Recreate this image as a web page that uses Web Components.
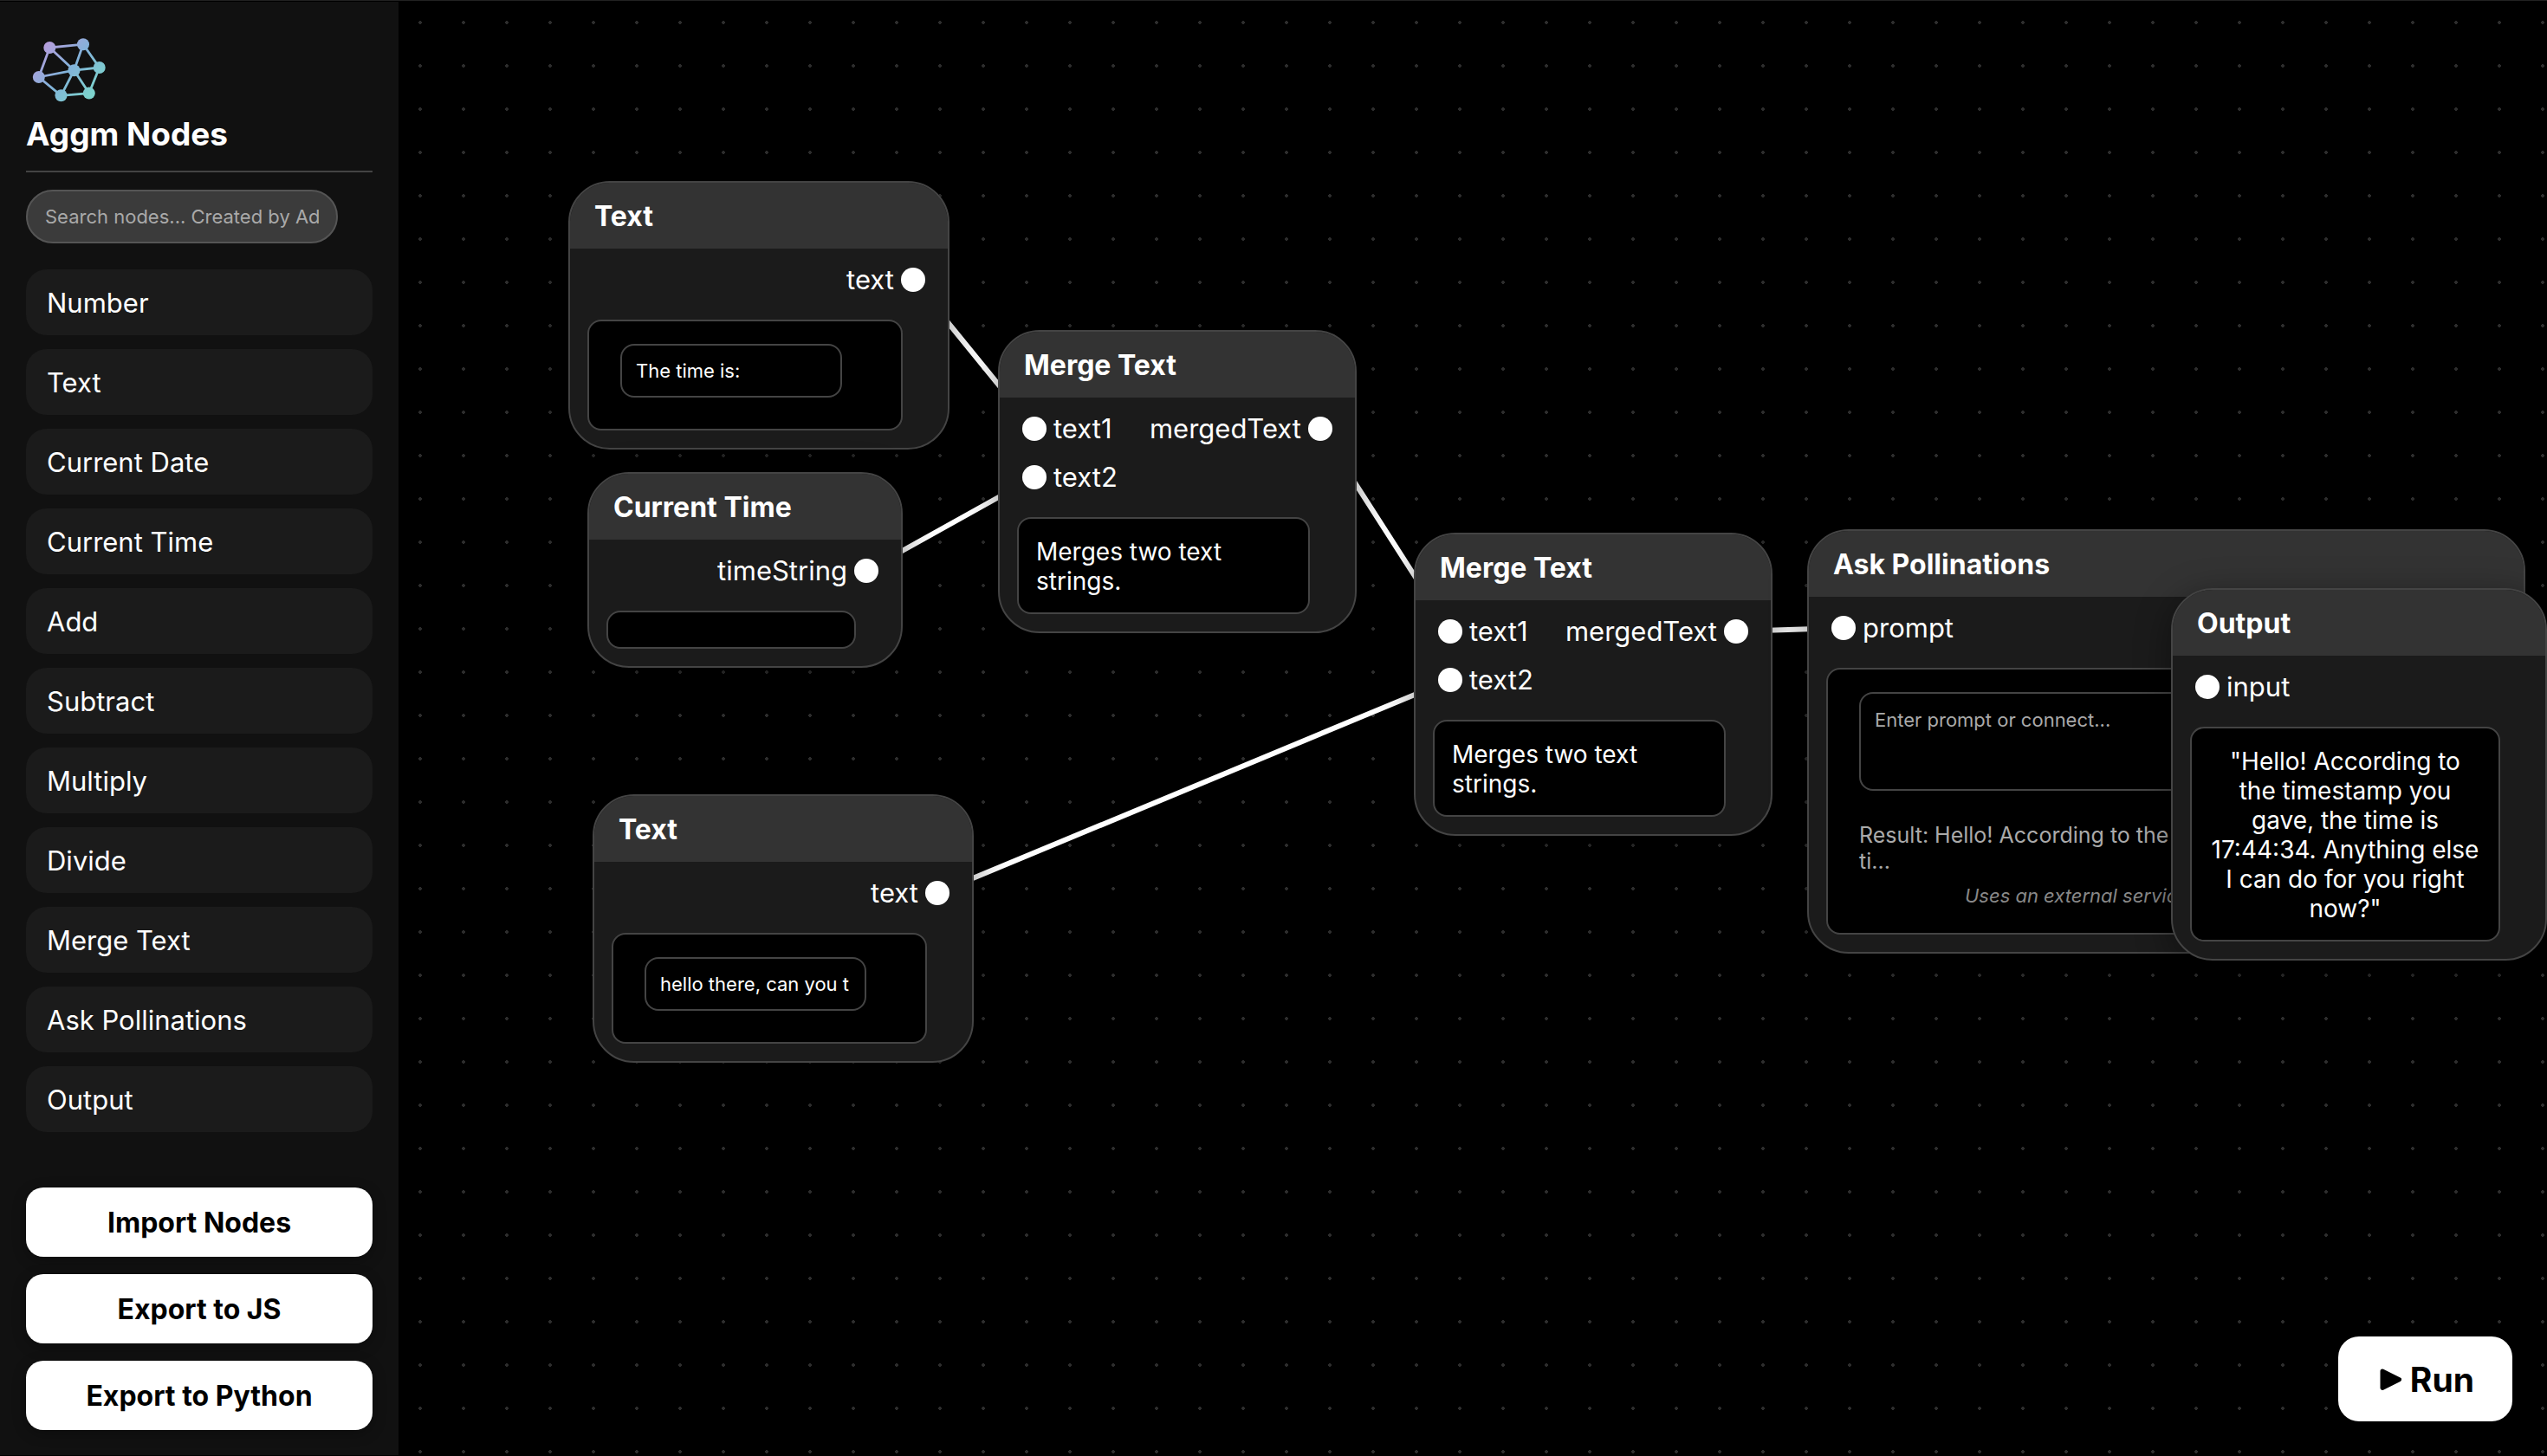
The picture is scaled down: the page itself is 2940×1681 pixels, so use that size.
<!DOCTYPE html>
<html lang="en">
<head>
<meta charset="utf-8">
<title>Aggm Nodes</title>
<style>
  html { height: 100%; background: #000; }
  body {
    box-sizing: border-box;
    height: 100%;
    margin: 0;
    border-top: 1px solid #222;
    border-bottom: 1px solid #000;
    overflow: hidden;
    color: #fff;
    font-family: Inter, "Liberation Sans", sans-serif;
    font-size: 31px;
    line-height: 36px;
  }
</style>
</head>
<body>

<editor-app>
  <side-bar slot="side" heading="Aggm Nodes">
    <palette-item>Number</palette-item>
    <palette-item>Text</palette-item>
    <palette-item>Current Date</palette-item>
    <palette-item>Current Time</palette-item>
    <palette-item>Add</palette-item>
    <palette-item>Subtract</palette-item>
    <palette-item>Multiply</palette-item>
    <palette-item>Divide</palette-item>
    <palette-item>Merge Text</palette-item>
    <palette-item>Ask Pollinations</palette-item>
    <palette-item>Output</palette-item>
    <action-button slot="actions">Import Nodes</action-button>
    <action-button slot="actions">Export to JS</action-button>
    <action-button slot="actions">Export to Python</action-button>
  </side-bar>

  <flow-canvas>
    <node-card id="text-a" heading="Text" x="196" y="208" width="440">
      <node-port slot="out" name="text" side="out"></node-port>
      <node-field label="Text value" value="The time is:"></node-field>
    </node-card>
    <node-card id="time" heading="Current Time" x="218" y="544" width="364">
      <node-port slot="out" name="timeString" side="out"></node-port>
    </node-card>
    <node-card id="merge-a" heading="Merge Text" x="692" y="380" width="414">
      <node-port slot="in" name="text1"></node-port>
      <node-port slot="in" name="text2"></node-port>
      <node-port slot="out" name="mergedText" side="out"></node-port>
      <span>Merges two text strings.</span>
    </node-card>
    <node-card id="text-b" heading="Text" x="224" y="916" width="440">
      <node-port slot="out" name="text" side="out"></node-port>
      <node-field label="Text value" value="hello there, can you t"></node-field>
    </node-card>
    <node-card id="merge-b" heading="Merge Text" x="1172" y="614" width="414">
      <node-port slot="in" name="text1"></node-port>
      <node-port slot="in" name="text2"></node-port>
      <node-port slot="out" name="mergedText" side="out"></node-port>
      <span>Merges two text strings.</span>
    </node-card>
    <node-card id="ask" heading="Ask Pollinations" x="1626" y="610" width="829">
      <node-port slot="in" name="prompt"></node-port>
      <prompt-panel hint="Enter prompt or connect...">
        <span>Result: Hello! According to the ti...</span>
        <span slot="note">Uses an external service</span>
      </prompt-panel>
    </node-card>
    <node-card id="output" heading="Output" x="2046" y="678" width="434" centered>
      <node-port slot="in" name="input"></node-port>
      <span>"Hello! According to the timestamp you gave, the time is 17:44:34. Anything else I can do for you right now?"</span>
    </node-card>

    <node-link from="text-a:text" to="merge-a:text1"></node-link>
    <node-link from="time:timeString" to="merge-a:text2"></node-link>
    <node-link from="merge-a:mergedText" to="merge-b:text1"></node-link>
    <node-link from="text-b:text" to="merge-b:text2"></node-link>
    <node-link from="merge-b:mergedText" to="ask:prompt"></node-link>

    <run-button slot="overlay">Run</run-button>
  </flow-canvas>
</editor-app>

<script>
  const define = (name, html, setup) => {
    const template = document.createElement('template');
    template.innerHTML = html;
    customElements.define(name, class extends HTMLElement {
      connectedCallback() {
        if (this.shadowRoot) return;
        this.attachShadow({ mode: 'open' }).append(template.content.cloneNode(true));
        if (setup) setup(this, this.shadowRoot);
      }
    });
  };

  define('editor-app', `
    <style>
      :host { display: flex; height: 100%; }
      ::slotted(*) { min-width: 0; }
    </style>
    <slot name="side"></slot>
    <slot></slot>
  `);

  define('brand-logo', `
    <style>
      :host { display: block; width: 94px; height: 90px; }
      svg { display: block; width: 100%; height: 100%; }
    </style>
    <svg viewBox="30 32 94 90" aria-hidden="true">
      <defs>
        <linearGradient id="g" gradientUnits="userSpaceOnUse" x1="52" y1="50" x2="108" y2="106">
          <stop offset="0" stop-color="#b79ddc"/>
          <stop offset=".5" stop-color="#82b2da"/>
          <stop offset="1" stop-color="#7dd3cd"/>
        </linearGradient>
      </defs>
      <g stroke="url(#g)" stroke-width="2.8" fill="none">
        <path d="M57.3 55 96 51.2 114.7 78 102.8 107.6 70.5 110.3 44.8 89Z"/>
        <path d="M57.3 55 85.5 81.2 102.8 107.6M96 51.2 85.5 81.2 70.5 110.3M44.8 89 85.5 81.2 114.7 78"/>
      </g>
      <g fill="url(#g)">
        <circle cx="57.3" cy="55" r="7"/><circle cx="96" cy="51.2" r="7"/>
        <circle cx="114.7" cy="78" r="7"/><circle cx="85.5" cy="81.2" r="7"/>
        <circle cx="44.8" cy="89" r="7"/><circle cx="70.5" cy="110.3" r="7"/>
        <circle cx="102.8" cy="107.6" r="7"/>
      </g>
    </svg>
  `);

  define('side-bar', `
    <style>
      :host {
        box-sizing: border-box;
        display: flex;
        flex: 0 0 460px;
        flex-direction: column;
        margin-top: 1px;
        padding: 30px 30px 29px;
        background: #111;
      }
      h1 {
        margin: 10px 0 20px;
        padding-bottom: 20px;
        border-bottom: 2px solid #444;
        font-size: 37px;
        font-weight: 700;
        line-height: 45px;
      }
      input {
        box-sizing: border-box;
        width: 360px;
        height: 62px;
        margin: 0 0 30px;
        padding: 0 20px;
        border: 2px solid #555;
        border-radius: 31px;
        outline: 0;
        background: #3b3b3b;
        color: #fff;
        font: inherit;
        font-size: 22px;
      }
      input::placeholder { color: #a9a9a9; opacity: 1; }
      input::-webkit-search-cancel-button { display: none; }
      nav, footer { display: flex; flex-direction: column; }
      nav { gap: 16px; }
      footer { gap: 20px; margin-top: auto; }
    </style>
    <brand-logo></brand-logo>
    <h1></h1>
    <input type="search" aria-label="Search nodes" placeholder="Search nodes... Created by Ad">
    <nav><slot></slot></nav>
    <footer><slot name="actions"></slot></footer>
  `, (host, root) => {
    root.querySelector('h1').textContent = host.getAttribute('heading');
  });

  define('palette-item', `
    <style>
      :host { display: block; }
      button {
        display: block;
        box-sizing: border-box;
        width: 100%;
        padding: 21px 24px 19px;
        border: 0;
        border-radius: 24px;
        background: #1b1b1b;
        color: #fff;
        font: inherit;
        text-align: left;
      }
    </style>
    <button type="button"><slot></slot></button>
  `);

  define('action-button', `
    <style>
      :host { display: block; }
      button {
        display: block;
        width: 100%;
        padding: 23px 24px 21px;
        border: 0;
        border-radius: 20px;
        background: #fff;
        box-shadow: 0 4px 16px rgba(0, 0, 0, .3);
        color: #000;
        font: inherit;
        font-size: 32px;
        font-weight: 700;
      }
    </style>
    <button type="button"><slot></slot></button>
  `);

  define('run-button', `
    <style>
      :host { display: block; position: absolute; right: 40px; bottom: 39px; }
      button {
        display: flex;
        align-items: center;
        gap: 10px;
        padding: 27px 44px 25px 48px;
        border: 0;
        border-radius: 24px;
        background: #fff;
        color: #000;
        font: inherit;
        font-size: 39px;
        font-weight: 700;
        line-height: 46px;
      }
      svg { display: block; width: 25px; height: 26px; }
    </style>
    <button type="button">
      <svg viewBox="0 0 25 26" aria-hidden="true"><path d="M3 3 22.5 12.7 3 22.5Z" stroke="#000" stroke-width="5" stroke-linejoin="round"/></svg>
      <slot></slot>
    </button>
  `);

  define('node-port', `
    <style>
      :host { display: flex; align-items: center; gap: 8px; }
      :host([side="out"]) { flex-direction: row-reverse; }
      i { flex: none; width: 28px; height: 28px; border-radius: 50%; background: #fff; }
    </style>
    <i></i><span></span>
  `, (host, root) => {
    root.querySelector('span').textContent = host.getAttribute('name');
    host.center = () => {
      const r = root.querySelector('i').getBoundingClientRect();
      return [r.left + r.width / 2, r.top + r.height / 2];
    };
  });

  define('node-field', `
    <style>
      :host { display: block; padding: 5px 16px 17px; }
      input {
        display: block;
        box-sizing: border-box;
        width: 256px;
        height: 62px;
        margin: 0;
        padding: 0 16px;
        border: 2px solid #444;
        border-radius: 16px;
        outline: 0;
        background: #000;
        color: #fff;
        font: inherit;
        font-size: 22px;
      }
    </style>
    <input type="text">
  `, (host, root) => {
    const input = root.querySelector('input');
    input.value = host.getAttribute('value');
    input.setAttribute('aria-label', host.getAttribute('label'));
  });

  define('prompt-panel', `
    <style>
      :host { display: block; padding: 5px 16px 11px; }
      textarea {
        display: block;
        box-sizing: border-box;
        width: 100%;
        height: 114px;
        margin: 0 0 36px;
        padding: 17px 16px 15px;
        border: 2px solid #444;
        border-radius: 16px;
        outline: 0;
        resize: none;
        background: #000;
        color: #fff;
        font: inherit;
        font-size: 22px;
        line-height: 26px;
      }
      textarea::placeholder { color: #a9a9a9; opacity: 1; }
      p { margin: 0; }
      .result { max-width: 380px; margin-bottom: 12px; color: #aaa; font-size: 25px; line-height: 30px; }
      .note { padding-left: 122px; color: #888; font-size: 22px; font-style: italic; line-height: 26px; }
    </style>
    <textarea aria-label="Prompt"></textarea>
    <p class="result"><slot></slot></p>
    <p class="note"><slot name="note"></slot></p>
  `, (host, root) => {
    root.querySelector('textarea').placeholder = host.getAttribute('hint');
  });

  define('node-card', `
    <style>
      :host {
        box-sizing: border-box;
        display: block;
        position: absolute;
        border: 2px solid #444;
        border-radius: 48px;
        overflow: hidden;
        background: #1b1b1b;
        box-shadow: 0 8px 40px rgba(0, 0, 0, .4);
      }
      h2 {
        margin: 0;
        padding: 21px 28px 19px;
        background: #333;
        font-size: 32px;
        font-weight: 700;
        line-height: 36px;
      }
      .ports { display: flex; justify-content: space-between; padding: 18px 26px 28px; }
      .col { display: flex; flex-direction: column; gap: 20px; }
      .content {
        margin: 0 52px 20px 20px;
        padding: 21px 20px 19px;
        border: 2px solid #444;
        border-radius: 16px;
        background: #000;
        font-size: 28px;
        line-height: 34px;
      }
      :host([centered]) .content { text-align: center; }
    </style>
    <h2></h2>
    <div class="ports">
      <div class="col"><slot name="in"></slot></div>
      <div class="col"><slot name="out"></slot></div>
    </div>
    <div class="content"><slot></slot></div>
  `, (host, root) => {
    root.querySelector('h2').textContent = host.getAttribute('heading');
    host.style.left = host.getAttribute('x') + 'px';
    host.style.top = host.getAttribute('y') + 'px';
    host.style.width = host.getAttribute('width') + 'px';
  });

  define('flow-canvas', `
    <style>
      :host {
        display: block;
        position: relative;
        flex: 1;
        overflow: hidden;
        background: #000 radial-gradient(circle, #2d2d2d 2px, transparent 2px) 0 0 / 50px 50px;
      }
      svg { position: absolute; width: 100%; height: 100%; }
      line { stroke: #fff; stroke-width: 6px; stroke-linecap: round; }
      ::slotted(node-link) { display: none; }
    </style>
    <svg aria-hidden="true"></svg>
    <slot></slot>
    <slot name="overlay"></slot>
  `, (host, root) => {
    const svg = root.querySelector('svg');
    const box = host.getBoundingClientRect();
    const locate = ref => {
      const [id, name] = ref.split(':');
      const port = host.querySelector(`#${id} node-port[name="${name}"]`);
      const [x, y] = port.center();
      return [x - box.left, y - box.top];
    };
    for (const link of host.querySelectorAll('node-link')) {
      const [x1, y1] = locate(link.getAttribute('from'));
      const [x2, y2] = locate(link.getAttribute('to'));
      const line = document.createElementNS('http://www.w3.org/2000/svg', 'line');
      Object.entries({ x1, y1, x2, y2 }).forEach(([k, v]) => line.setAttribute(k, v));
      svg.append(line);
    }
  });
</script>
</body>
</html>
